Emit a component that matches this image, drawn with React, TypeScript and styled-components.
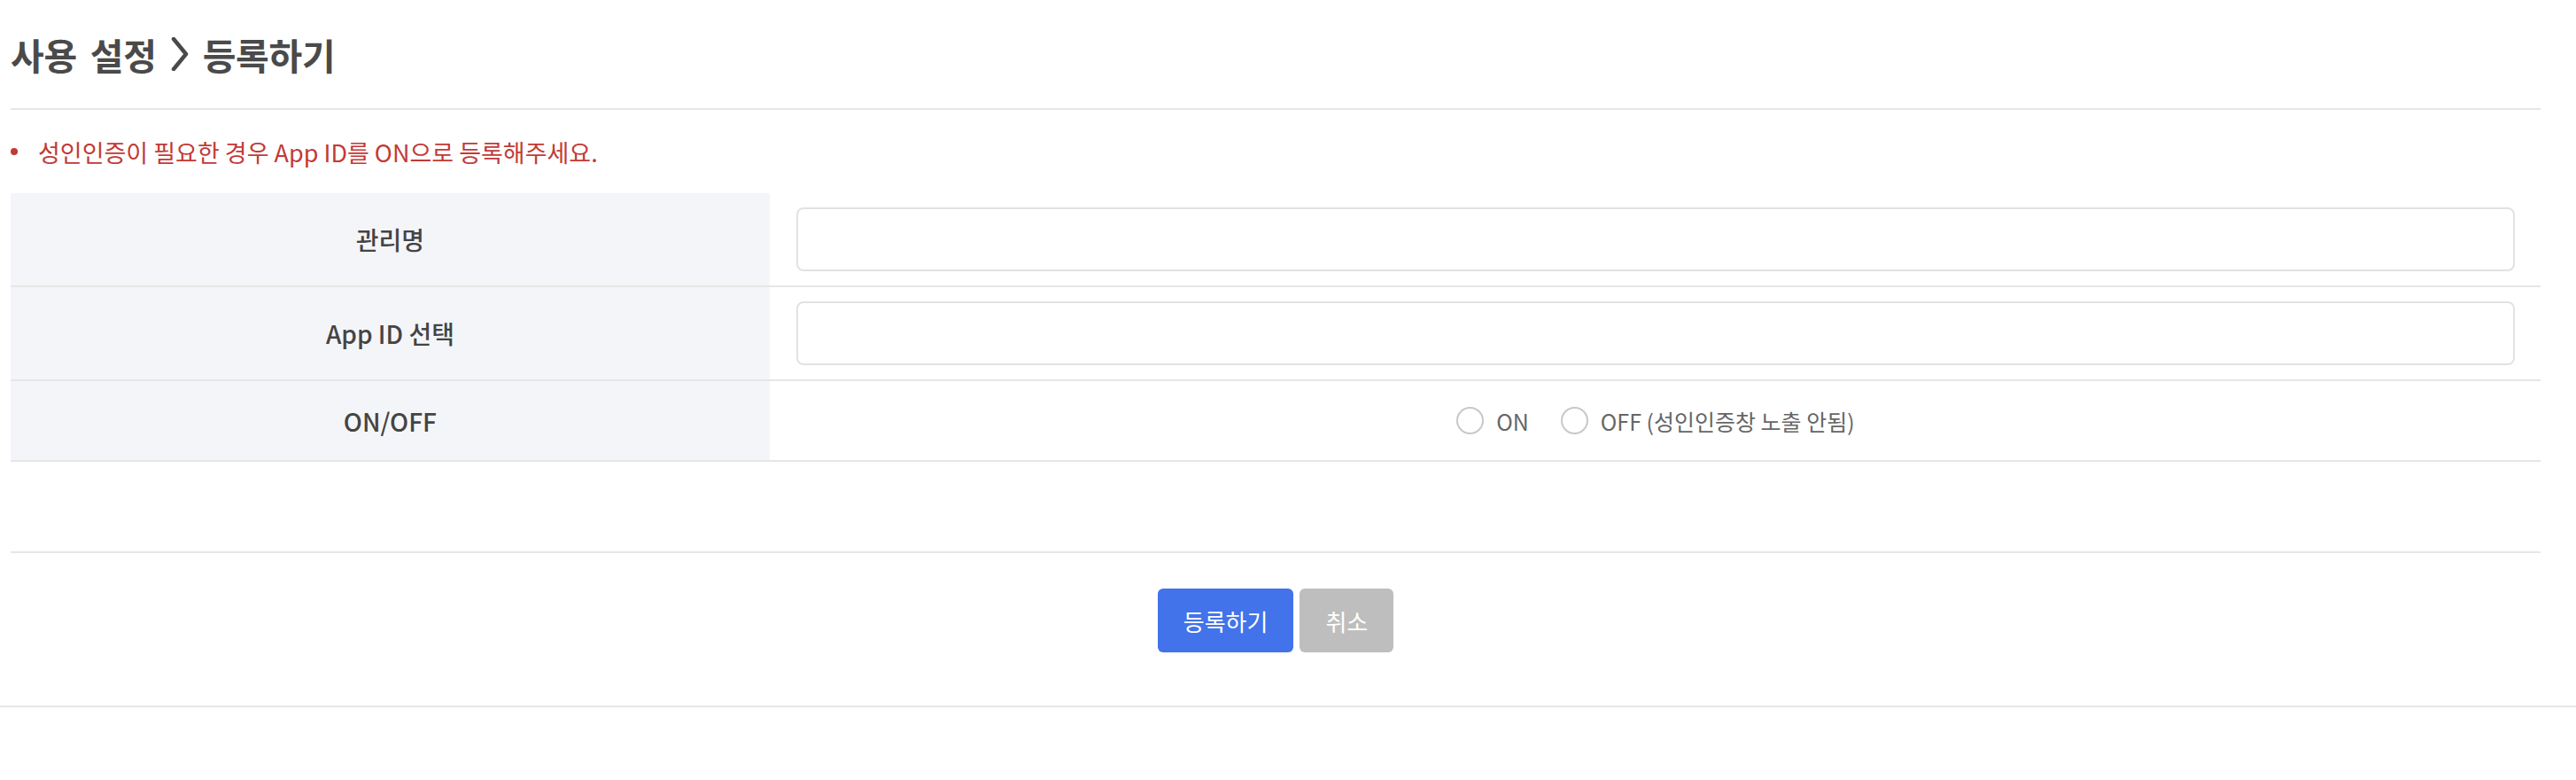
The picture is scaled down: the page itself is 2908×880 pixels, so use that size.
import React, { useState } from "react";
import styled, { createGlobalStyle } from "styled-components";

const GlobalStyle = createGlobalStyle`
  body {
    margin: 0;
    background: #ffffff;
    font-family: "Noto Sans CJK KR", "Noto Sans", sans-serif;
    color: #444444;
  }
`;

const Page = styled.div`
  width: 100%;
`;

const Container = styled.div`
  padding: 0 40px 0 12px;
`;

const Header = styled.div`
  height: 122px;
  display: flex;
  align-items: center;
  gap: 16px;
  border-bottom: 2px solid #e6e6e6;
`;

const Title = styled.h1`
  margin: 0;
  font-size: 41px;
  font-weight: 700;
  color: #4a4a4a;
  letter-spacing: -0.3px;
  word-spacing: 6px;
`;

const Notice = styled.ul`
  margin: 0;
  padding: 0;
  list-style: none;
  height: 94px;
  display: flex;
  align-items: center;
`;

const NoticeItem = styled.li`
  display: flex;
  align-items: center;
  gap: 23px;
  font-size: 27px;
  color: #c23a36;

  &::before {
    content: "";
    width: 8px;
    height: 8px;
    border-radius: 50%;
    background: #c23a36;
  }
`;

const Table = styled.div`
  display: flex;
  flex-direction: column;
`;

const Row = styled.div<{ $height: number }>`
  display: grid;
  grid-template-columns: 30% 70%;
  min-height: ${(p) => p.$height}px;
  border-bottom: 2px solid #e6e6e6;
`;

const Label = styled.div`
  background: #f4f5f9;
  display: flex;
  align-items: center;
  justify-content: center;
  font-size: 28px;
  font-weight: 500;
  color: #444444;
`;

const Cell = styled.div<{ $center?: boolean }>`
  display: flex;
  align-items: center;
  justify-content: ${(p) => (p.$center ? "center" : "stretch")};
  padding: 16px 29px 16px 30px;
`;

const TextInput = styled.input`
  width: 100%;
  height: 72px;
  box-sizing: border-box;
  border: 2px solid #e2e2e2;
  border-radius: 8px;
  outline: none;
  padding: 0 16px;
  font-size: 26px;
  font-family: inherit;
`;

const RadioGroup = styled.div`
  display: flex;
  align-items: center;
  gap: 36px;
`;

const RadioLabel = styled.label`
  display: flex;
  align-items: center;
  gap: 14px;
  font-size: 25px;
  color: #666666;
  cursor: pointer;
`;

const RadioCircle = styled.span<{ $checked: boolean }>`
  width: 31px;
  height: 31px;
  box-sizing: border-box;
  border-radius: 50%;
  border: 2px solid #c8c8c8;
  background: #ffffff;
  display: flex;
  align-items: center;
  justify-content: center;

  &::after {
    content: "";
    width: 15px;
    height: 15px;
    border-radius: 50%;
    background: ${(p) => (p.$checked ? "#4273ea" : "transparent")};
  }
`;

const Actions = styled.div`
  margin-top: 101px;
  border-top: 2px solid #e6e6e6;
  padding: 40px 0 60px;
  display: flex;
  justify-content: center;
  gap: 7px;
`;

const Button = styled.button<{ $variant: "primary" | "cancel" }>`
  height: 72px;
  padding: 0 29px;
  border: none;
  border-radius: 6px;
  font-family: inherit;
  font-size: 26px;
  color: #ffffff;
  background: ${(p) => (p.$variant === "primary" ? "#4273ea" : "#bebebe")};
  cursor: pointer;
`;

const FooterLine = styled.div`
  border-top: 2px solid #e6e6e6;
`;

const Chevron = () => (
  <svg width="20" height="38" viewBox="0 0 20 38">
    <polyline
      points="3,2 17,19 3,36"
      fill="none"
      stroke="#4a4a4a"
      strokeWidth="4.5"
      strokeLinecap="round"
      strokeLinejoin="round"
    />
  </svg>
);

const App = () => {
  const [name, setName] = useState("");
  const [appId, setAppId] = useState("");
  const [status, setStatus] = useState<"" | "on" | "off">("");

  return (
    <Page>
      <GlobalStyle />
      <Container>
        <Header>
          <Title>사용 설정</Title>
          <Chevron />
          <Title>등록하기</Title>
        </Header>

        <Notice>
          <NoticeItem>성인인증이 필요한 경우 App ID를 ON으로 등록해주세요.</NoticeItem>
        </Notice>

        <Table>
          <Row $height={104}>
            <Label>관리명</Label>
            <Cell>
              <TextInput value={name} onChange={(e) => setName(e.target.value)} />
            </Cell>
          </Row>
          <Row $height={104}>
            <Label>App ID 선택</Label>
            <Cell>
              <TextInput value={appId} onChange={(e) => setAppId(e.target.value)} />
            </Cell>
          </Row>
          <Row $height={89}>
            <Label>ON/OFF</Label>
            <Cell $center>
              <RadioGroup>
                <RadioLabel onClick={() => setStatus("on")}>
                  <RadioCircle $checked={status === "on"} />
                  ON
                </RadioLabel>
                <RadioLabel onClick={() => setStatus("off")}>
                  <RadioCircle $checked={status === "off"} />
                  OFF (성인인증창 노출 안됨)
                </RadioLabel>
              </RadioGroup>
            </Cell>
          </Row>
        </Table>

        <Actions>
          <Button $variant="primary">등록하기</Button>
          <Button $variant="cancel">취소</Button>
        </Actions>
      </Container>
      <FooterLine />
    </Page>
  );
};

export default App;
